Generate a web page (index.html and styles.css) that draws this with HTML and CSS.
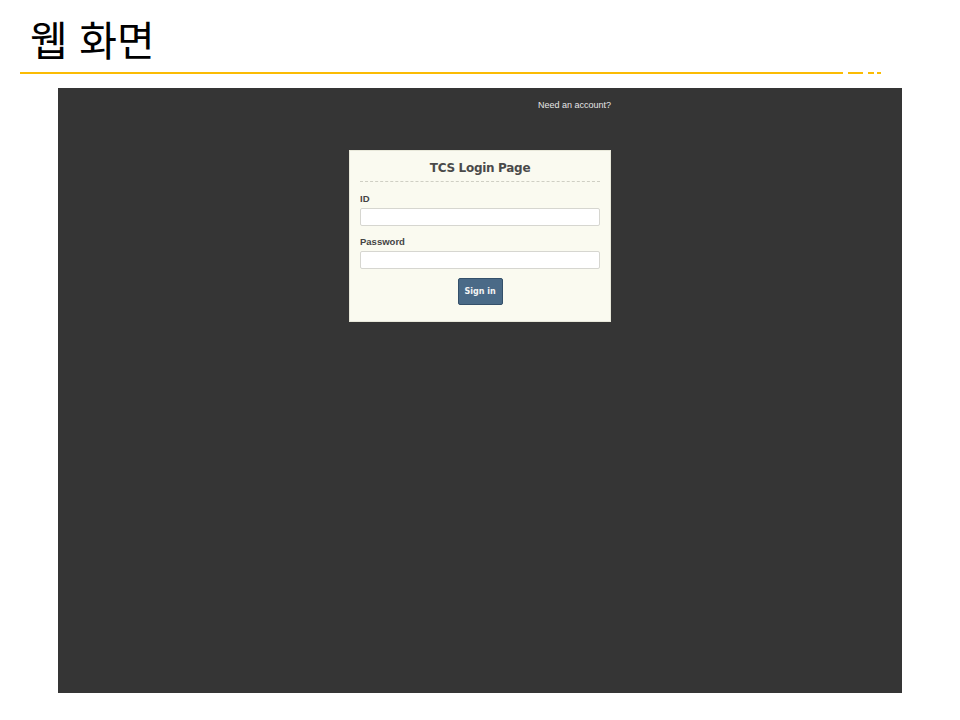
FILE: index.html
```html
<!DOCTYPE html>
<html lang="ko">
<head>
<meta charset="utf-8">
<title>웹 화면</title>
<link rel="stylesheet" href="styles.css">
</head>
<body>
<header class="slide-head">
  <h1 class="slide-title">웹 화면</h1>
  <div class="rule">
    <span class="rule-main"></span>
    <span class="rule-seg s1"></span>
    <span class="rule-seg s2"></span>
    <span class="rule-seg s3"></span>
  </div>
</header>
<main class="screen">
  <div class="nav"><a class="nav-link">Need an account?</a></div>
  <form class="card">
    <h2 class="card-title">TCS Login Page</h2>
    <label class="label">ID</label>
    <div class="input"></div>
    <label class="label">Password</label>
    <div class="input"></div>
    <div class="actions"><button type="button" class="btn">Sign in</button></div>
  </form>
</main>
</body>
</html>
```

FILE: styles.css
```css
* { box-sizing: border-box; }
html, body { margin: 0; padding: 0; background: #ffffff; }
body { width: 960px; height: 720px; overflow: hidden; }

.slide-head { padding: 15px 0 0 20px; height: 88px; }
.slide-title {
  margin: 0 0 0 10px;
  height: 57px;
  font-family: "Noto Sans CJK KR", "Noto Sans", sans-serif;
  font-weight: 400;
  font-size: 41px;
  line-height: 46px;
  color: #000;
}
.rule { display: flex; align-items: center; height: 2px; }
.rule span { display: block; height: 2px; background: #fbbc04; }
.rule-main { width: 823px; }
.s1 { width: 15px; margin-left: 5px; }
.s2 { width: 6px; margin-left: 5px; }
.s3 { width: 4px; margin-left: 3px; }

.screen {
  margin-left: 58px;
  width: 844px;
  height: 605px;
  background: #353535;
  display: flex;
  flex-direction: column;
  align-items: center;
  padding-top: 11px;
}
.nav { width: 262px; display: flex; justify-content: flex-end; height: 51px; }
.nav-link {
  font-family: "Liberation Sans", Arial, sans-serif;
  font-size: 9px;
  line-height: 12px;
  color: #e6e6e6;
}

.card {
  width: 262px;
  height: 172px;
  background: #fafaf0;
  border: 1px solid #e8e8da;
  padding: 8px 10px 0 10px;
  display: flex;
  flex-direction: column;
}
.card-title {
  margin: 0;
  text-align: center;
  font-family: "DejaVu Sans", "Open Sans", sans-serif;
  font-weight: 600;
  font-size: 12px;
  line-height: 18px;
  letter-spacing: -0.3px;
  color: #4a4a4a;
  padding-bottom: 4px;
  border-bottom: 1px dashed #cfcfc4;
}
.label {
  font-family: "Liberation Sans", Arial, sans-serif;
  font-weight: bold;
  font-size: 9.5px;
  line-height: 12px;
  color: #444;
  margin-top: 11px;
  margin-bottom: 3px;
}
.input {
  height: 18px;
  background: #fff;
  border: 1px solid #d6d6d0;
  border-radius: 2px;
}
.input + .label { margin-top: 10px; }
.actions { display: flex; justify-content: center; margin-top: 9px; }
.btn {
  width: 45px;
  height: 27px;
  padding: 0;
  background: #4a6a87;
  border: 1px solid #34506a;
  border-radius: 2px;
  color: #f4f4f4;
  font-family: "DejaVu Sans", Verdana, sans-serif;
  font-weight: bold;
  font-size: 8px;
}
```
